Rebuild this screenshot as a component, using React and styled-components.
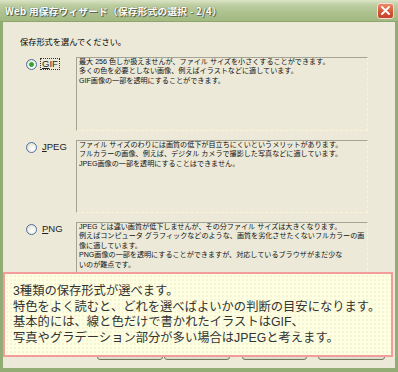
import React from "react";
import styled, { createGlobalStyle, css } from "styled-components";

const Global = createGlobalStyle`
  html, body { margin: 0; padding: 0; background: #ece9d8; }
  #root { width: 398px; height: 372px; }
`;

const JP = `"Noto Sans CJK JP", "Noto Sans", sans-serif`;
const MIXED = `"Liberation Sans", "Noto Sans CJK JP", sans-serif`;

const Window = styled.div`
  position: relative;
  width: 398px;
  height: 372px;
  display: flex;
  flex-direction: column;
  background: #ece9d8;
  overflow: hidden;
`;

const TitleBar = styled.div`
  height: 22px;
  flex: none;
  box-sizing: border-box;
  display: flex;
  align-items: center;
  justify-content: space-between;
  padding: 0 4px 0 5px;
  background: linear-gradient(to bottom, #dbe5c6 0%, #bccda0 25%, #adc18e 60%, #a2b981 100%);
  border-bottom: 1px solid #8ea66e;
`;

const Title = styled.span`
  font-family: ${JP};
  font-weight: 700;
  font-size: 9.6px;
  letter-spacing: 0.3px;
  color: #ffffff;
  text-shadow: 1px 1px 0 #5d6650, 0 0 1px #4b5440;
  white-space: nowrap;
`;

const CloseButton = styled.div`
  width: 17px;
  height: 16px;
  box-sizing: border-box;
  border: 1px solid #f3ddd2;
  border-radius: 3px;
  background: linear-gradient(to bottom, #ea8a6a 0%, #d65a3a 50%, #c4432a 100%);
  display: flex;
  align-items: center;
  justify-content: center;
`;

const Body = styled.div`
  flex: 1;
  display: flex;
  flex-direction: column;
  box-sizing: border-box;
  border-left: 3px solid #93ab74;
  border-right: 3px solid #93ab74;
  border-bottom: 4px solid #93ab74;
  padding: 16px 10px 8px 17px;
  font-family: ${MIXED};
  color: #000;
`;

const Heading = styled.div`
  font-size: 8.2px;
  line-height: 10px;
  white-space: nowrap;
`;

const OptionList = styled.div`
  display: flex;
  flex-direction: column;
  gap: 9px;
  margin-top: 9px;
`;

const Option = styled.div`
  display: grid;
  grid-template-columns: 56px 292px;
  align-items: start;
`;

const Choice = styled.div`
  display: flex;
  align-items: center;
  gap: 3px;
  padding: 1px 0 0 6px;
`;

const Radio = styled.span`
  width: 9px;
  height: 9px;
  border-radius: 50%;
  border: 1px solid #50709e;
  background: radial-gradient(circle at 65% 65%, #ffffff 0%, #f2f1e6 45%, #d4d3c4 100%);
  ${(p) =>
    p.$checked &&
    css`
      background: radial-gradient(circle, #2ea338 0 1.8px, #6fc46f 2.3px, transparent 2.8px),
        radial-gradient(circle at 65% 65%, #ffffff 0%, #f2f1e6 45%, #d4d3c4 100%);
    `}
`;

const Label = styled.span`
  font-family: "Liberation Sans", Arial, sans-serif;
  font-size: 9.5px;
  line-height: 10px;
  color: #222;
  padding: 0 1px;
  border: 1px dotted ${(p) => (p.$focused ? "#333" : "transparent")};
  u { text-decoration: underline; text-underline-offset: 1px; }
`;

const Description = styled.div`
  height: ${(p) => p.$h}px;
  box-sizing: border-box;
  border-top: 1px solid #a3a396;
  border-left: 1px solid #a3a396;
  border-right: 1px dashed #f7f6cf;
  border-bottom: 1px dashed #f7f6cf;
  padding: 0 1px 0 2px;
  font-size: 7.1px;
  line-height: 9.4px;
  white-space: nowrap;
  overflow: hidden;
  color: #111;
`;

const ButtonRow = styled.div`
  margin-top: auto;
  display: flex;
  justify-content: flex-end;
`;

const Button = styled.button`
  width: ${(p) => p.$w}px;
  height: 22px;
  margin-left: ${(p) => p.$gap}px;
  box-sizing: border-box;
  border: 1px solid #6f7d5a;
  border-radius: 3px;
  background: linear-gradient(to bottom, #ffffff, #f0efe6 80%, #d8d6c6);
  padding: 0;
`;

const Callout = styled.div`
  position: absolute;
  left: 3px;
  top: 272px;
  width: 390px;
  height: 85px;
  box-sizing: border-box;
  border: 2px solid #f39c9c;
  background-color: #fefee0;
  background-image: radial-gradient(#efeed2 0.6px, transparent 0.9px);
  background-size: 4px 4px;
  padding: 10px 8px 0 8px;
  font-family: ${MIXED};
  font-size: 12.3px;
  line-height: 15.6px;
  color: #333;
  white-space: nowrap;
`;

const options = [
  {
    key: "GIF",
    label: (
      <>
        <u>G</u>IF
      </>
    ),
    checked: true,
    h: 74,
    lines: [
      "最大 256 色しか扱えませんが、ファイル サイズを小さくすることができます。",
      "多くの色を必要としない画像、例えばイラストなどに適しています。",
      "GIF画像の一部を透明にすることができます。",
    ],
  },
  {
    key: "JPEG",
    label: (
      <>
        <u>J</u>PEG
      </>
    ),
    h: 73,
    lines: [
      "ファイル サイズのわりには画質の低下が目立ちにくいというメリットがあります。",
      "フルカラーの画像、例えば、デジタル カメラで撮影した写真などに適しています。",
      "JPEG画像の一部を透明にすることはできません。",
    ],
  },
  {
    key: "PNG",
    label: (
      <>
        <u>P</u>NG
      </>
    ),
    h: 74,
    lines: [
      "JPEG とは違い画質が低下しませんが、その分ファイル サイズは大きくなります。",
      "例えばコンピュータ グラフィックなどのような、画質を劣化させたくないフルカラーの画",
      "像に適しています。",
      "PNG画像の一部を透明にすることができますが、対応しているブラウザがまだ少な",
      "いのが難点です。",
    ],
  },
];

export default function App() {
  return (
    <>
      <Global />
      <Window>
        <TitleBar>
          <Title>Web 用保存ウィザード（保存形式の選択 - 2/4）</Title>
          <CloseButton>
            <svg width="9" height="9" viewBox="0 0 9 9">
              <path d="M1 1 L8 8 M8 1 L1 8" stroke="#fff" strokeWidth="1.8" strokeLinecap="round" />
            </svg>
          </CloseButton>
        </TitleBar>
        <Body>
          <Heading>保存形式を選んでください。</Heading>
          <OptionList>
            {options.map((o) => (
              <Option key={o.key}>
                <Choice>
                  <Radio $checked={o.checked} />
                  <Label $focused={o.checked}>{o.label}</Label>
                </Choice>
                <Description $h={o.h}>
                  {o.lines.map((l, i) => (
                    <div key={i}>{l}</div>
                  ))}
                </Description>
              </Option>
            ))}
          </OptionList>
          <ButtonRow>
            <Button $w={66} $gap={0} aria-label="戻る" />
            <Button $w={66} $gap={1} aria-label="次へ" />
            <Button $w={65} $gap={12} aria-label="保存" />
            <Button $w={67} $gap={11} aria-label="キャンセル" />
          </ButtonRow>
        </Body>
        <Callout>
          <div>3種類の保存形式が選べます。</div>
          <div>特色をよく読むと、どれを選べばよいかの判断の目安になります。</div>
          <div>基本的には、線と色だけで書かれたイラストはGIF、</div>
          <div>写真やグラデーション部分が多い場合はJPEGと考えます。</div>
        </Callout>
      </Window>
    </>
  );
}
